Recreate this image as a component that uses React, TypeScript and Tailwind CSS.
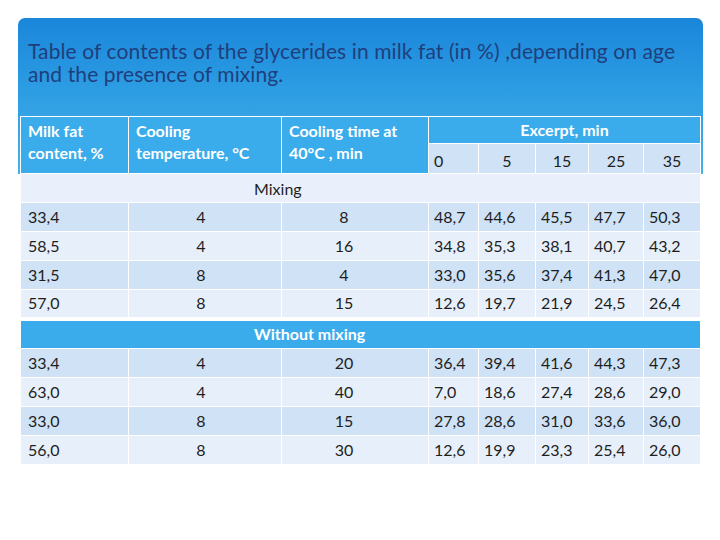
import React from "react";

const mixing = [
  ["33,4", "4", "8", "48,7", "44,6", "45,5", "47,7", "50,3"],
  ["58,5", "4", "16", "34,8", "35,3", "38,1", "40,7", "43,2"],
  ["31,5", "8", "4", "33,0", "35,6", "37,4", "41,3", "47,0"],
  ["57,0", "8", "15", "12,6", "19,7", "21,9", "24,5", "26,4"],
];

const noMixing = [
  ["33,4", "4", "20", "36,4", "39,4", "41,6", "44,3", "47,3"],
  ["63,0", "4", "40", "7,0", "18,6", "27,4", "28,6", "29,0"],
  ["33,0", "8", "15", "27,8", "28,6", "31,0", "33,6", "36,0"],
  ["56,0", "8", "30", "12,6", "19,9", "23,3", "25,4", "26,0"],
];

const cell = "border border-white p-0";
const head = `${cell} bg-[#3aaceb] pl-[7px] pt-[3px] text-left align-top text-[16px] leading-[22px] font-bold text-white`;

const DataRow = ({ row, i }: { row: string[]; i: number }) => (
  <tr className={`h-[29px] ${i % 2 === 0 ? "bg-[#cfe2f6]" : "bg-[#e7f0fa]"}`}>
    <td className={`${cell} pl-[7px]`}>{row[0]}</td>
    <td className={`${cell} pr-[8px] text-center`}>{row[1]}</td>
    <td className={`${cell} pr-[22px] text-center`}>{row[2]}</td>
    {row.slice(3).map((v, j) => (
      <td key={j} className={`${cell} pl-[5px]`}>
        {v}
      </td>
    ))}
  </tr>
);

export default function App() {
  return (
    <div className="min-h-[540px] w-[720px] bg-white pl-[18px] pt-[18px] font-['Lato',sans-serif]">
      <div className="w-[685px] rounded-t-[7px] bg-[linear-gradient(180deg,#1a86da_0%,#2c9ce3_45%,#47b2e9_100%)] bg-[length:100%_156px] bg-no-repeat">
        <h1 className="h-[98px] whitespace-nowrap pl-[10px] pt-[21px] text-[21px] leading-[23px] font-normal tracking-[0.1px] text-[#1f3f7c]">
          Table of contents of the glycerides in milk fat (in %) ,depending on age
          <br />
          and the presence of mixing.
        </h1>
        <table className="ml-[2px] w-[680px] table-fixed border-collapse text-[16px] text-[#1e1e1e]">
          <colgroup>
            <col className="w-[108px]" />
            <col className="w-[153px]" />
            <col className="w-[147px]" />
            <col className="w-[50px]" />
            <col className="w-[57px]" />
            <col className="w-[53px]" />
            <col className="w-[55px]" />
            <col className="w-[57px]" />
          </colgroup>
          <thead>
            <tr className="h-[27px]">
              <th rowSpan={2} className={head}>
                Milk fat
                <br />
                content, %
              </th>
              <th rowSpan={2} className={head}>
                Cooling
                <br />
                temperature, °C
              </th>
              <th rowSpan={2} className={head}>
                Cooling time at
                <br />
                40°C , min
              </th>
              <th colSpan={5} className={`${cell} bg-[#3aaceb] text-center text-[16px] font-bold text-white`}>
                Excerpt, min
              </th>
            </tr>
            <tr className="h-[30px] bg-[#cfe2f6] font-normal">
              <td className={`${cell} pl-[5px] pt-[4px]`}>0</td>
              <td className={`${cell} pt-[4px] text-center`}>5</td>
              <td className={`${cell} pt-[4px] text-center`}>15</td>
              <td className={`${cell} pt-[4px] text-center`}>25</td>
              <td className={`${cell} pt-[4px] text-center`}>35</td>
            </tr>
          </thead>
          <tbody>
            <tr className="h-[29px] bg-[#e9f0fb]">
              <td colSpan={8} className={`${cell} pl-[233px] pt-[2px]`}>
                Mixing
              </td>
            </tr>
            {mixing.map((row, i) => (
              <DataRow key={i} row={row} i={i} />
            ))}
            <tr className="h-[30px] bg-[#3aaceb]">
              <td colSpan={8} className={`${cell} border-t-[4px] pl-[233px] text-[16px] font-bold text-white`}>
                Without mixing
              </td>
            </tr>
            {noMixing.map((row, i) => (
              <DataRow key={i} row={row} i={i} />
            ))}
          </tbody>
        </table>
      </div>
    </div>
  );
}
